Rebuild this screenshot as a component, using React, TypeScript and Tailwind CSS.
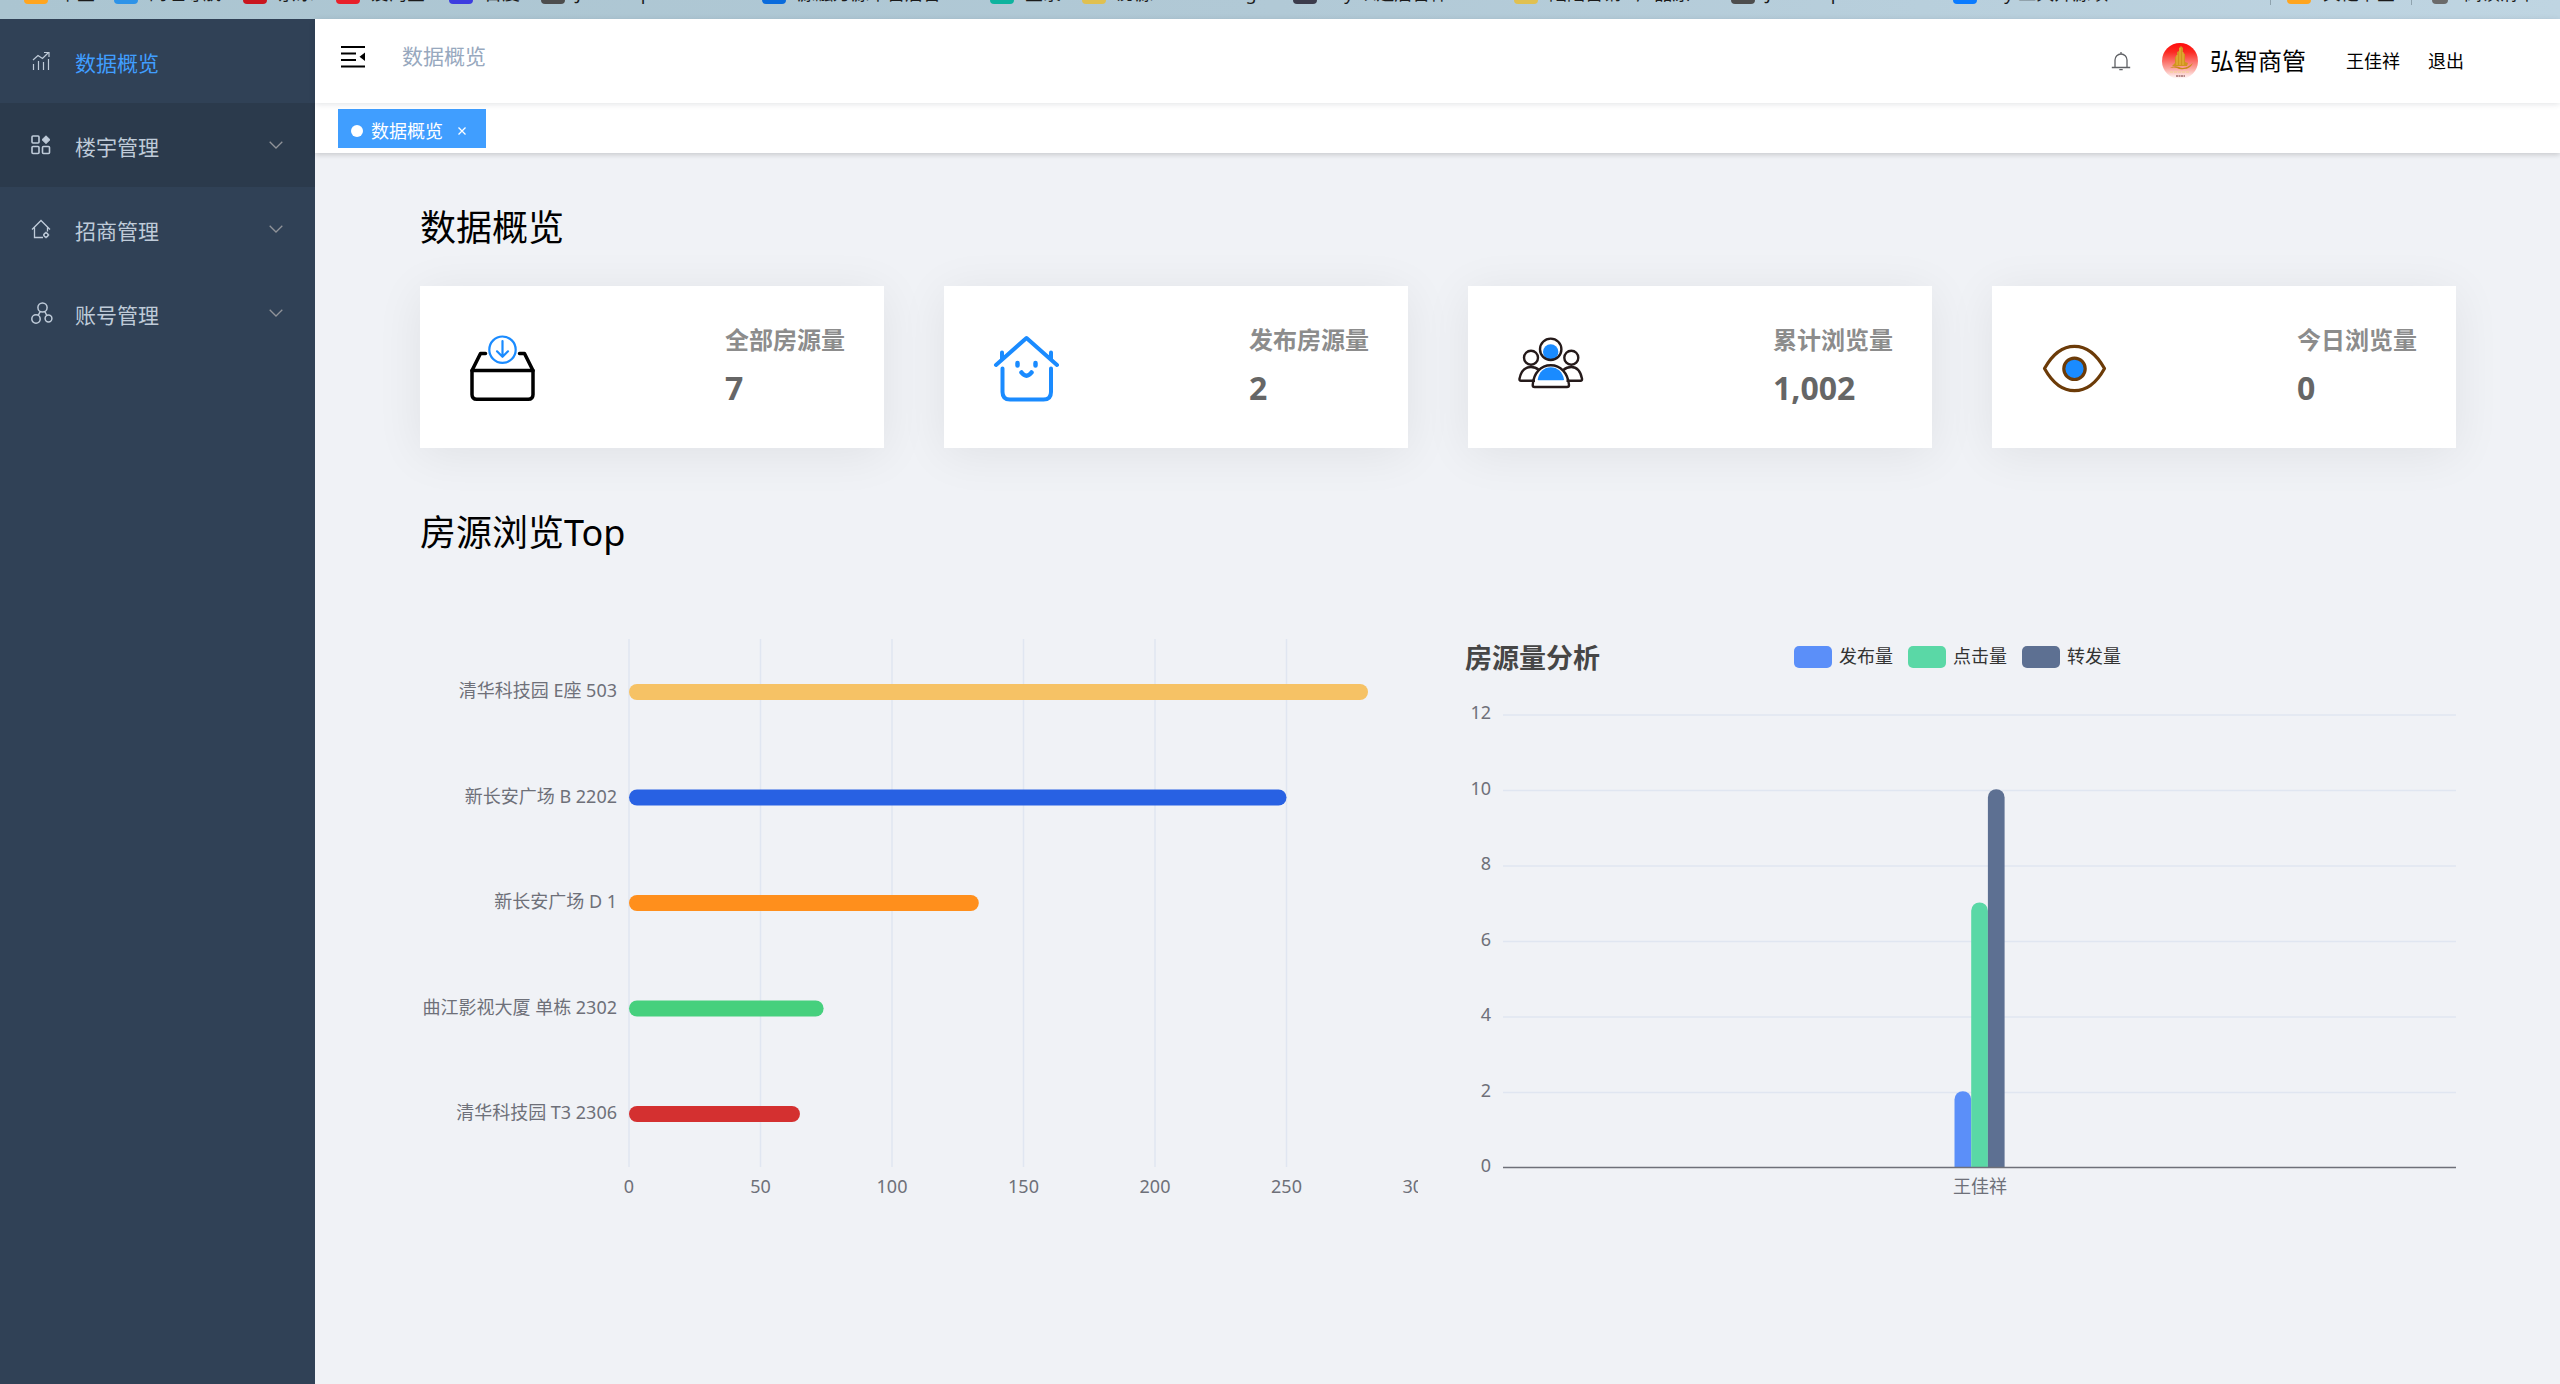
import type { ReactNode } from "react";

const bookmarks = [
  { label: "卡登", color: "bg-[#ffa51f]", width: "w-[90px]" },
  { label: "网址导航", color: "bg-[#2e93e8]", width: "w-[129px]" },
  { label: "京东", color: "bg-[#c9151e]", width: "w-[93px]" },
  { label: "爱淘宝", color: "bg-[#e8202a]", width: "w-[113px]" },
  { label: "百度", color: "bg-[#3c3ce0]", width: "w-[92px]" },
  { label: "JavaScript", color: "bg-[#4d4d4d]", width: "w-[221px]" },
  { label: "源融万源单营后台", color: "bg-[#0a6bdc]", width: "w-[228px]" },
  { label: "登录", color: "bg-[#0db39e]", width: "w-[92px]" },
  { label: "房源", color: "bg-[#e0c050]", width: "w-[92px]" },
  { label: "Design", color: "bg-transparent", width: "w-[119px]" },
  { label: "My 以运后台件", color: "bg-[#3b3b4b]", width: "w-[221px]" },
  { label: "陆陆营销 - 产品原", color: "bg-[#e0c050]", width: "w-[217px]" },
  { label: "JavaScript", color: "bg-[#4d4d4d]", width: "w-[222px]" },
  { label: "My 工具开源项", color: "bg-[#0a7bff]", width: "w-[200px]" },
];

const menuItems = [
  { name: "数据概览", icon: <TrendIcon />, active: true },
  { name: "楼宇管理", icon: <MenuGridIcon />, open: true },
  { name: "招商管理", icon: <HomeIcon />, open: false },
  { name: "账号管理", icon: <ShareIcon />, open: false },
];

const stats = [
  { name: "全部房源量", value: "7", icon: <InboxIcon /> },
  { name: "发布房源量", value: "2", icon: <HouseIcon /> },
  { name: "累计浏览量", value: "1,002", icon: <PeopleIcon /> },
  { name: "今日浏览量", value: "0", icon: <EyeIcon /> },
];

const topViews = [
  { name: "清华科技园 E座 503", value: 281, color: "#f6c265" },
  { name: "新长安广场 B 2202", value: 250, color: "#2861e3" },
  { name: "新长安广场 D 1", value: 133, color: "#ff8f1c" },
  { name: "曲江影视大厦 单栋 2302", value: 74, color: "#46d07d" },
  { name: "清华科技园 T3 2306", value: 65, color: "#d43030" },
];

const analysis = [
  { name: "发布量", value: 2, color: "#5b8ff9" },
  { name: "点击量", value: 7, color: "#5ad8a6" },
  { name: "转发量", value: 10, color: "#5d7092" },
];

function TrendIcon() {
  return (
    <svg width="20" height="20" viewBox="0 0 20 20" fill="none" stroke="currentColor" strokeWidth="1.2">
      <path d="M2.5 19v-6M7.5 19V10M12.500 19v-8M17.500 19V8M2 9l5-4.500 4.500 3L17 2M13 1.500h5v4.500" />
    </svg>
  );
}

function MenuGridIcon() {
  return (
    <svg width="20" height="20" viewBox="0 0 20 20" fill="none" stroke="currentColor" strokeWidth="1.6">
      <rect x="1" y="1" width="7" height="7" rx="1" />
      <rect x="1" y="11.500" width="7" height="7" rx="1" />
      <rect x="11.500" y="11.500" width="7" height="7" rx="1" />
      <path d="M15 .8 19 4.700 15 8.600 11 4.700Z" fill="currentColor" strokeWidth="1" strokeLinejoin="round" />
    </svg>
  );
}

function HomeIcon() {
  return (
    <svg width="20" height="20" viewBox="0 0 20 20" fill="none" stroke="currentColor" strokeWidth="1.3">
      <path d="M1 10.500 10 1.500l9 9M3.500 8.500V18.500H12M16.500 8.500v4" />
      <circle cx="15" cy="16" r="2" />
      <path d="M15 12.800v1.200M15 18v1.200M12 16h1M17 16h1.200" />
    </svg>
  );
}

function ShareIcon() {
  return (
    <svg width="22" height="22" viewBox="0 0 22 22" fill="none" stroke="currentColor" strokeWidth="1.5">
      <circle cx="11.500" cy="5.500" r="4.600" />
      <circle cx="5" cy="17" r="4.200" />
      <circle cx="17.500" cy="16.500" r="3.400" />
      <path d="M9.200 9.500 7.200 13.400M13.800 9.500l2 4" />
    </svg>
  );
}

function ChevronIcon() {
  return (
    <svg width="14" height="8" viewBox="0 0 14 8" fill="none" stroke="#909399" strokeWidth="1.3" aria-hidden="true">
      <path d="M.7.800 7 7 13.300.800" />
    </svg>
  );
}

function FoldIcon() {
  return (
    <svg width="24" height="24" viewBox="0 0 24 24" fill="none" stroke="#000" strokeWidth="2.200">
      <path d="M0 2h24M0 8.500h15M0 15h15M0 21.500h24" />
      <path d="M18.500 11.700 24 7.500v8.500Z" fill="#000" stroke="none" />
    </svg>
  );
}

function BellIcon() {
  return (
    <svg width="20" height="20" viewBox="0 0 20 20" fill="none" stroke="#606266" strokeWidth="1.300">
      <path d="M.8 16.500h18.400M4 16.500V9a6 6 0 0 1 12 0v7.500M10 3V1M8.300 18.700h3.400" />
    </svg>
  );
}

function Avatar() {
  return (
    <svg width="36" height="36" viewBox="0 0 36 36">
      <defs>
        <linearGradient id="avatar" x1="0" y1="0" x2="0" y2="1">
          <stop offset="0" stopColor="#ff0a0a" />
          <stop offset=".25" stopColor="#fb2a22" />
          <stop offset=".7" stopColor="#fba39c" />
          <stop offset="1" stopColor="#fff" />
        </linearGradient>
      </defs>
      <circle cx="18" cy="18" r="18" fill="url(#avatar)" />
      <path d="M17 5l2-2 2 2v5l2 1v8l3 1-1 3H10l3-3v-6l2-1v-4l2-1Z" fill="#d0941f" />
      <path d="M15 12v10M18 5v17M21 9v13" stroke="#f0c04a" strokeWidth=".8" />
      <path d="M8 25q4-3 9-1 6 3 14-4-3 6-9 6-4 1-7-1-3-1-7 0" fill="#c98a1b" />
      <path d="M8 29h20" stroke="#f5d0a0" strokeWidth="1.500" strokeDasharray="3 1" />
      <path d="M14 33h9" stroke="#b98a8a" strokeWidth="2" strokeDasharray="2 .5" />
    </svg>
  );
}

function InboxIcon() {
  return (
    <svg width="72" height="72" viewBox="0 0 72 72" fill="none" strokeLinecap="round" strokeLinejoin="round">
      <g stroke="#000" strokeWidth="3.500">
        <path d="M19.500 20.500H14.500L6 37.500M53.500 20.500h5L67 37.500" />
        <path d="M6 37.500H67V61.500q0 4.800-4.800 4.800H10.800Q6 66.300 6 61.500Z" />
      </g>
      <g stroke="#1a8bff" strokeWidth="2.200">
        <circle cx="36.500" cy="16.700" r="13.200" />
        <path d="M36.500 8v15.500M31 18.300l5.500 5.500 5.500-5.500" />
      </g>
    </svg>
  );
}

function HouseIcon() {
  return (
    <svg width="72" height="72" viewBox="0 0 72 72" fill="none" stroke="#1a8bff" strokeWidth="4" strokeLinecap="round" strokeLinejoin="round">
      <path d="M6 32 36.500 5 67 32M12 26V19.500M61 26V19.500" />
      <path d="M12.500 35.500V59q0 7.500 7.500 7.500H53.500q7.500 0 7.500-7.500V35.500" />
      <path d="M27.500 30v2.500M45.500 30v2.500M31.500 39.500q5 6.500 10 0" strokeWidth="4.500" />
    </svg>
  );
}

function PeopleIcon() {
  return (
    <svg width="72" height="72" viewBox="0 0 72 72" fill="none" stroke="#251a1a" strokeWidth="2.400" strokeLinejoin="round">
      <circle cx="36.700" cy="19" r="7.700" fill="#1a8bff" stroke="none" />
      <circle cx="36.700" cy="16.300" r="10.700" />
      <circle cx="17" cy="24.700" r="7" />
      <circle cx="57.300" cy="24.700" r="7" />
      <path d="M21 47.700H7q-1.800 0-1.500-2C7 38 11.500 34 17 34q4.500 0 8 3M52.500 47.700h14q1.800 0 1.500-2C66.500 38 62.500 34 57.300 34q-4.500 0-8 3" />
      <path d="M20.500 54H53q2 0 2-2C54 40 46.500 32.300 36.700 32.300S19.500 40 18.700 52q0 2 1.800 2Z" />
      <path d="M23.700 46.500C25 39 30 34.300 36.700 34.300S48.800 39 50 46.500q0 .8-.8.800H24.500q-.8 0-.8-.800Z" fill="#1a8bff" stroke="none" />
    </svg>
  );
}

function EyeIcon() {
  return (
    <svg width="72" height="72" viewBox="0 0 72 72" fill="none" stroke="#6c3b08" strokeWidth="3.200" strokeLinejoin="round">
      <path d="M6.500 35.500C14 22 24 13.300 36.500 13.300S59 22 66.500 35.500C59 49 49 57.700 36.500 57.700S14 49 6.500 35.500Z" />
      <circle cx="36.500" cy="35.800" r="10.700" fill="#1a8bff" />
    </svg>
  );
}

function BookmarkBar() {
  return (
    <nav className="h-[19px] overflow-hidden bg-linear-to-r from-[#abc5d1] via-[#b1c9d6] to-[#bfd5e2]">
      <ul className="-mt-[19px] flex h-6 items-center pl-6 pr-6 text-lg leading-6 text-[#1b1b1b] whitespace-nowrap">
        {bookmarks.map((item, index) => (
          <li key={index} className={`shrink-0 ${item.width}`}>
            <a href="#" className="flex items-center gap-[11px]">
              <span className={`h-[22px] w-6 rounded-sm ${item.color}`}></span>
              {item.label}
            </a>
          </li>
        ))}
        <li className="ml-auto border-l border-[#8fa3ae] pl-4">
          <a href="#" className="flex items-center gap-3">
            <span className="h-[22px] w-6 rounded-sm bg-[#ffa51f]"></span>其他书签
          </a>
        </li>
        <li className="ml-4 border-l border-[#8fa3ae] pl-5">
          <a href="#" className="flex items-center gap-4">
            <span className="h-[22px] w-4 rounded-sm bg-[#6b6b6b]"></span>阅读清单
          </a>
        </li>
      </ul>
    </nav>
  );
}

function Sidebar() {
  return (
    <aside className="w-[315px] shrink-0 bg-[#304156]">
      <ul>
        {menuItems.map((item) => (
          <li key={item.name}>
            <button
              className={`flex h-[84px] w-full items-center pl-[31px] pr-8 text-[21px] text-[#bfcbd9] ${
                item.open ? "bg-[#2b3a4c]" : ""
              }`}
            >
              <span className="flex w-11 items-center">{item.icon}</span>
              <span className={item.active ? "pt-[5px] text-[#409eff]" : "pt-[5px]"}>{item.name}</span>
              {!item.active && (
                <span className="ml-auto">
                  <ChevronIcon />
                </span>
              )}
            </button>
          </li>
        ))}
      </ul>
    </aside>
  );
}

function Header() {
  return (
    <header className="relative flex h-[84px] items-center bg-white pl-[26px] pr-24 shadow-[0_1px_6px_rgba(0,21,41,0.12)]">
      <div className="flex items-center gap-[37px] pb-2">
        <button aria-label="收起菜单">
          <FoldIcon />
        </button>
        <span className="text-[21px] text-[#97a8be]">数据概览</span>
      </div>
      <div className="ml-auto flex items-center text-lg text-black">
        <button aria-label="通知">
          <BellIcon />
        </button>
        <span className="ml-[31px]">
          <Avatar />
        </span>
        <span className="ml-3 text-2xl">弘智商管</span>
        <span className="ml-10">王佳祥</span>
        <button className="ml-7">退出</button>
      </div>
    </header>
  );
}

function TagsBar() {
  return (
    <div className="flex h-[50px] items-start bg-white pl-[23px] pt-1.5 shadow-[0_2px_5px_rgba(0,0,0,0.16)]">
      <div className="flex h-[39px] items-center bg-[#409eff] pl-[13px] pr-5 pt-1 text-lg text-white">
        <span className="size-3 rounded-full bg-white"></span>
        <a href="#" className="ml-2">
          数据概览
        </a>
        <button aria-label="关闭" className="ml-[15px]">
          <svg width="8" height="8" viewBox="0 0 8 8" stroke="#fff" strokeWidth="1.300">
            <path d="M.5.500l7 7M7.500.500l-7 7" />
          </svg>
        </button>
      </div>
    </div>
  );
}

function StatCard({ name, value, icon }: { name: string; value: string; icon: ReactNode }) {
  return (
    <div className="flex h-[162px] items-center justify-between bg-white pl-[46px] pr-[39px] shadow-[0_6px_45px_rgba(0,0,0,0.07)]">
      <span className="mt-1">{icon}</span>
      <div className="pb-[7px] font-bold">
        <p className="text-2xl leading-[48px] text-[#8c8c8c]">{name}</p>
        <p className="text-[32px] leading-[48px] text-[#666]">{value}</p>
      </div>
    </div>
  );
}

function TopViewsChart() {
  const left = 209;
  const unit = 2.63;
  return (
    <svg viewBox="0 0 998 600" className="w-full overflow-hidden text-lg" fill="#6e7079">
      {[0, 50, 100, 150, 200, 250, 300].map((tick) => (
        <g key={tick}>
          {tick < 300 && (
            <line x1={left + tick * unit} x2={left + tick * unit} y1="19" y2="547" stroke="#e0e6f1" strokeWidth="1.500" />
          )}
          <text x={left + tick * unit} y="573" textAnchor="middle">
            {tick}
          </text>
        </g>
      ))}
      {topViews.map((item, index) => (
        <g key={item.name}>
          <text x="197" y={77 + index * 105.5} textAnchor="end">
            {item.name}
          </text>
          <rect x={left} y={64 + index * 105.5} width={item.value * unit} height="16" rx="8" fill={item.color} />
        </g>
      ))}
    </svg>
  );
}

function AnalysisChart() {
  const bottom = 547;
  const unit = 37.75;
  return (
    <svg viewBox="0 0 998 600" className="w-full text-lg" fill="#6e7079">
      <text x="7" y="48" className="text-[27px] font-bold" fill="#464646">
        房源量分析
      </text>
      {analysis.map((item, index) => (
        <g key={item.name}>
          <rect x={336 + index * 114} y="26" width="38" height="22" rx="5" fill={item.color} />
          <text x={381 + index * 114} y="43" fill="#333">
            {item.name}
          </text>
        </g>
      ))}
      {[0, 2, 4, 6, 8, 10, 12].map((tick) => (
        <g key={tick}>
          <text x="33" y={bottom - tick * unit + 5} textAnchor="end">
            {tick}
          </text>
          {tick > 0 && (
            <line x1="45" x2="998" y1={bottom + 1 - tick * unit} y2={bottom + 1 - tick * unit} stroke="#e0e6f1" strokeWidth="1.500" />
          )}
        </g>
      ))}
      {analysis.map((item, index) => {
        const x = 496.5 + index * 16.7;
        const top = bottom - item.value * unit;
        return (
          <path key={item.name} d={`M${x} ${bottom}V${top + 8}a8.350 8.350 0 0 1 16.700 0V${bottom}Z`} fill={item.color} />
        );
      })}
      <line x1="45" x2="998" y1="547.500" y2="547.500" stroke="#6e7079" strokeWidth="1.500" />
      <text x="522" y="573" textAnchor="middle">
        王佳祥
      </text>
    </svg>
  );
}

export default function App() {
  return (
    <div className="flex min-h-screen flex-col bg-[#f0f2f6] font-['Noto_Sans','Noto_Sans_CJK_SC',sans-serif]">
      <BookmarkBar />
      <div className="flex flex-1">
        <Sidebar />
        <div className="min-w-0 flex-1">
          <Header />
          <TagsBar />
          <main className="pl-[105px] pr-[104px] pt-12 text-black">
            <h2 className="text-4xl leading-[54px]">数据概览</h2>
            <div className="mt-[31px] grid grid-cols-4 gap-[60px]">
              {stats.map((item) => (
                <StatCard key={item.name} {...item} />
              ))}
            </div>
            <h2 className="mt-[58px] text-4xl leading-[54px]">房源浏览Top</h2>
            <div className="mt-[60px] grid grid-cols-2 gap-10">
              <TopViewsChart />
              <AnalysisChart />
            </div>
          </main>
        </div>
      </div>
    </div>
  );
}
